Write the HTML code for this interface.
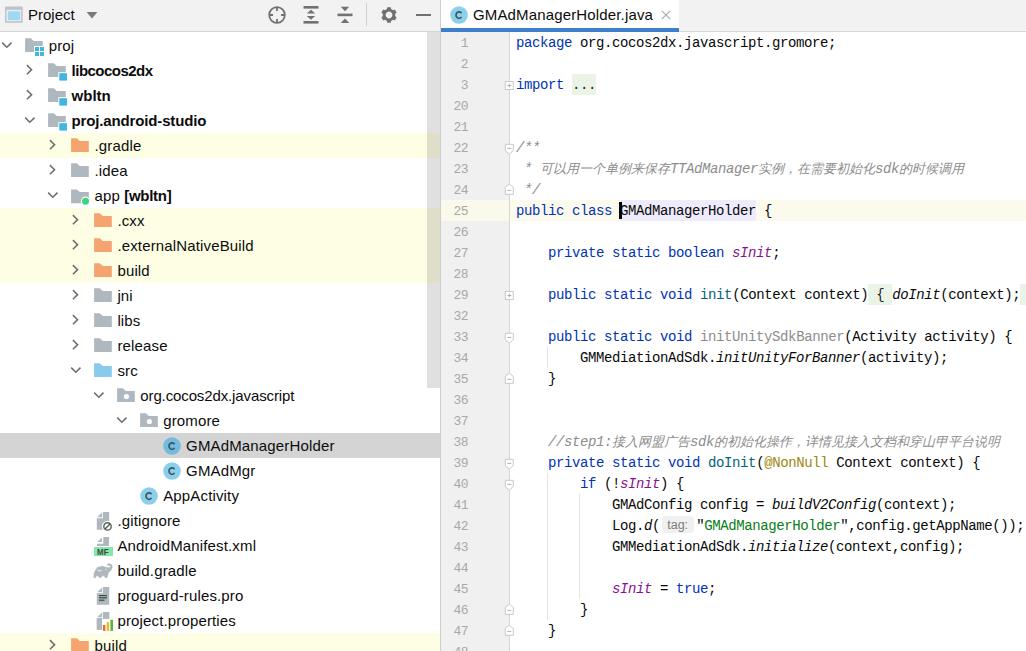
<!DOCTYPE html>
<html><head><meta charset="utf-8"><style>
html,body{margin:0;padding:0;width:1026px;height:651px;overflow:hidden;background:#fff;}
body{position:relative;font-family:"Liberation Sans",sans-serif;}
.ic{position:absolute;display:block;overflow:visible}
#left{position:absolute;left:0;top:0;width:440px;height:651px;background:#fff;overflow:hidden}
#lhead{position:absolute;left:0;top:0;width:440px;height:31px;background:#f2f2f2;border-bottom:1px solid #d4d4d4}
.row{position:absolute;left:0;width:440px;height:25px}
.yel{background:#fefee5}
.sel{background:#d4d4d4}
.tt{position:absolute;height:25px;line-height:25px;font-size:15px;letter-spacing:0.15px;color:#0c0c0c;white-space:nowrap}
.tt b{font-weight:bold;letter-spacing:-0.3px}
#sb{position:absolute;left:427px;top:32px;width:13px;height:356px;background:rgba(0,0,0,0.12)}
#div{position:absolute;left:440px;top:0;width:1px;height:651px;background:#cfcfcf}
#tabs{position:absolute;left:441px;top:0;width:585px;height:31px;background:#f2f2f2;border-bottom:1px solid #d6d6d6}
#tab{position:absolute;left:441px;top:0;width:238px;height:28px;background:#fff}
#tabline{position:absolute;left:441px;top:28px;width:238px;height:4px;background:#3d7fcb}
#tabt{position:absolute;left:473px;top:0;height:30px;line-height:30px;font-size:15px;letter-spacing:0.15px;color:#0c0c0c;white-space:nowrap}
#gutter{position:absolute;left:441px;top:32px;width:68px;height:619px;background:#f0f0f0}
#gline{position:absolute;left:509px;top:32px;width:1px;height:619px;background:#d8d8d8}
.ln{position:absolute;left:441px;width:27px;text-align:right;height:21px;line-height:21px;font-family:"Liberation Mono",monospace;font-size:13px;letter-spacing:-0.6px;color:#a8a8a8}
.cl{position:absolute;left:516px;height:21px;line-height:21px;font-family:"Liberation Mono",monospace;font-size:14px;letter-spacing:-0.4px;color:#080808;white-space:pre}
.k{color:#0033b3}
.c{color:#8c8c8c;font-style:italic}
.s{color:#067d17}
.an{color:#9e880d}
.sf{color:#871094;font-style:italic}
.m{color:#00627a}
.u{color:#8c8c8c}
.cl i{font-style:italic}
.cj{font-size:13px;letter-spacing:0}
.fold{display:inline-block;height:20px;padding-top:1px;line-height:21px;vertical-align:top;position:relative;top:-1px;background:#e9f4e6;color:#222}
.hl{display:inline-block;height:20px;padding-top:1px;line-height:21px;vertical-align:top;position:relative;top:-1px;background:#edebfc}
.inl{display:inline-block;width:32px;height:17px;line-height:18.5px;margin:0 2.5px 0 1.6px;vertical-align:1px;background:#f0f0f0;border-radius:4px;color:#7d7d7d;font-family:"Liberation Sans",sans-serif;font-size:12.5px;letter-spacing:0;text-align:center}
#caretrow{position:absolute;left:441px;top:200px;width:585px;height:21px;background:#fcfaed}
#caret{position:absolute;left:619px;top:202px;width:3px;height:17px;background:#000}
.guide{position:absolute;width:1px;background:#e4e4e4}
</style></head><body>
<div id="left">
<div id="lhead"></div>
<svg class="ic" style="left:0;top:0" width="30" height="30" viewBox="0 0 30 30"><rect x="5" y="6.5" width="17.7" height="16.2" rx="0.8" fill="#bcc3ca"/><rect x="6.5" y="9.8" width="14.7" height="11.4" fill="#eceef0"/><rect x="7.9" y="11.3" width="12.2" height="8.8" fill="#9ed8f2"/></svg>
<div class="tt" style="left:28px;top:2px;height:26px;line-height:26px;letter-spacing:0">Project</div>
<svg class="ic" style="left:86px;top:11px" width="12" height="8" viewBox="0 0 12 8"><path d="M0.5 1 H11.5 L6 7.5 Z" fill="#7a7a7a"/></svg>
<svg class="ic" style="left:268px;top:6px" width="18" height="18" viewBox="0 0 18 18"><circle cx="9" cy="9" r="7.8" fill="none" stroke="#717171" stroke-width="1.8"/><path d="M9 1.5 V5 M9 13 V16.5 M1.5 9 H5 M13 9 H16.5" stroke="#717171" stroke-width="1.8"/></svg>
<svg class="ic" style="left:303px;top:5px" width="16" height="20" viewBox="0 0 16 20"><rect x="0.5" y="1" width="15" height="2.6" fill="#717171"/><rect x="0.5" y="16" width="15" height="2.6" fill="#717171"/><path d="M3.8 8.6 L8 4.8 L12.2 8.6 Z M3.8 11 L8 14.8 L12.2 11 Z" fill="#717171"/></svg>
<svg class="ic" style="left:337px;top:5px" width="16" height="20" viewBox="0 0 16 20"><rect x="0.5" y="8.6" width="15" height="2.6" fill="#717171"/><path d="M3.8 1.8 L8 6.2 L12.2 1.8 Z M3.8 17.9 L8 13.5 L12.2 17.9 Z" fill="#717171"/></svg>
<div style="position:absolute;left:366px;top:3px;width:1px;height:23px;background:#cfcfcf"></div>
<svg class="ic" style="left:381px;top:7px" width="16" height="16" viewBox="0 0 16 16"><path fill="#717171" fill-rule="evenodd" d="M5.95 2.04 L6.20 0.21 L9.80 0.21 L10.05 2.04 L12.13 3.25 L13.85 2.54 L15.65 5.66 L14.18 6.80 L14.18 9.20 L15.65 10.34 L13.85 13.46 L12.13 12.75 L10.05 13.96 L9.80 15.79 L6.20 15.79 L5.95 13.96 L3.87 12.75 L2.15 13.46 L0.35 10.34 L1.82 9.20 L1.82 6.80 L0.35 5.66 L2.15 2.54 L3.87 3.25 Z M8 4.6 A3.4 3.4 0 1 0 8.001 4.6 Z"/></svg>
<div style="position:absolute;left:415.5px;top:13.7px;width:15px;height:2.5px;background:#717171"></div>
<div class="row" style="top:33px"></div>
<svg class="ic" style="left:0;top:33px" width="14.2" height="25" viewBox="0 0 14.2 25"><path d="M2.2 9.6 L6.8500000000000005 14.2 L11.5 9.6" fill="none" stroke="#6c6c6c" stroke-width="1.5"/></svg>
<svg class="ic" style="left:25px;top:33px" width="24" height="25" viewBox="0 0 24 25"><path d="M0.1 5.2 H5.8 L8.8 7.9 H17.8 V19 H0.1 Z" fill="#afb8bf"/><rect x="9" y="13" width="11" height="11" fill="#fff"/><rect x="10" y="14" width="4" height="4" fill="#40b6e0"/><rect x="10" y="19" width="4" height="4" fill="#40b6e0"/><rect x="15" y="14" width="4" height="4" fill="#40b6e0"/><rect x="15" y="19" width="4" height="4" fill="#40b6e0"/></svg>
<div class="tt" style="left:48.7px;top:33px">proj</div>
<div class="row" style="top:58px"></div>
<svg class="ic" style="left:0;top:58px" width="34.9" height="25" viewBox="0 0 34.9 25"><path d="M26.9 7.1 L31.599999999999998 11.65 L26.9 16.2" fill="none" stroke="#6c6c6c" stroke-width="1.5"/></svg>
<svg class="ic" style="left:48px;top:58px" width="24" height="25" viewBox="0 0 24 25"><path d="M0.1 5.2 H5.8 L8.8 7.9 H17.8 V19 H0.1 Z" fill="#afb8bf"/><rect x="10.3" y="14.2" width="9.7" height="9.4" fill="#fff"/><rect x="11.3" y="15.2" width="7.7" height="7.4" fill="#40b6e0"/></svg>
<div class="tt" style="left:71.6px;top:58px"><b style="letter-spacing:-0.52px">libcocos2dx</b></div>
<div class="row" style="top:83px"></div>
<svg class="ic" style="left:0;top:83px" width="34.9" height="25" viewBox="0 0 34.9 25"><path d="M26.9 7.1 L31.599999999999998 11.65 L26.9 16.2" fill="none" stroke="#6c6c6c" stroke-width="1.5"/></svg>
<svg class="ic" style="left:48px;top:83px" width="24" height="25" viewBox="0 0 24 25"><path d="M0.1 5.2 H5.8 L8.8 7.9 H17.8 V19 H0.1 Z" fill="#afb8bf"/><rect x="10.3" y="14.2" width="9.7" height="9.4" fill="#fff"/><rect x="11.3" y="15.2" width="7.7" height="7.4" fill="#40b6e0"/></svg>
<div class="tt" style="left:71.6px;top:83px"><b style="letter-spacing:0">wbltn</b></div>
<div class="row" style="top:108px"></div>
<svg class="ic" style="left:0;top:108px" width="37.2" height="25" viewBox="0 0 37.2 25"><path d="M25.2 9.6 L29.85 14.2 L34.5 9.6" fill="none" stroke="#6c6c6c" stroke-width="1.5"/></svg>
<svg class="ic" style="left:48px;top:108px" width="24" height="25" viewBox="0 0 24 25"><path d="M0.1 5.2 H5.8 L8.8 7.9 H17.8 V19 H0.1 Z" fill="#afb8bf"/><rect x="10.3" y="14.2" width="9.7" height="9.4" fill="#fff"/><rect x="11.3" y="15.2" width="7.7" height="7.4" fill="#40b6e0"/></svg>
<div class="tt" style="left:71.6px;top:108px"><b style="letter-spacing:-0.15px">proj.android-studio</b></div>
<div class="row yel" style="top:133px"></div>
<svg class="ic" style="left:0;top:133px" width="57.9" height="25" viewBox="0 0 57.9 25"><path d="M49.9 7.1 L54.6 11.65 L49.9 16.2" fill="none" stroke="#6c6c6c" stroke-width="1.5"/></svg>
<svg class="ic" style="left:71px;top:133px" width="24" height="25" viewBox="0 0 24 25"><path d="M0.1 5.2 H5.8 L8.8 7.9 H17.8 V19 H0.1 Z" fill="#f5a46f"/></svg>
<div class="tt" style="left:94.5px;top:133px">.gradle</div>
<div class="row" style="top:158px"></div>
<svg class="ic" style="left:0;top:158px" width="57.9" height="25" viewBox="0 0 57.9 25"><path d="M49.9 7.1 L54.6 11.65 L49.9 16.2" fill="none" stroke="#6c6c6c" stroke-width="1.5"/></svg>
<svg class="ic" style="left:71px;top:158px" width="24" height="25" viewBox="0 0 24 25"><path d="M0.1 5.2 H5.8 L8.8 7.9 H17.8 V19 H0.1 Z" fill="#afb8bf"/></svg>
<div class="tt" style="left:94.5px;top:158px">.idea</div>
<div class="row" style="top:183px"></div>
<svg class="ic" style="left:0;top:183px" width="60.2" height="25" viewBox="0 0 60.2 25"><path d="M48.2 9.6 L52.85 14.2 L57.5 9.6" fill="none" stroke="#6c6c6c" stroke-width="1.5"/></svg>
<svg class="ic" style="left:71px;top:183px" width="24" height="25" viewBox="0 0 24 25"><path d="M0.1 6.4 H5.8 L8.8 9.1 H17.8 V20.2 H0.1 Z" fill="#afb8bf"/><circle cx="14.5" cy="18.2" r="4.6" fill="#fff"/><circle cx="14.5" cy="18.2" r="3.5" fill="#3dd47c"/></svg>
<div class="tt" style="left:94.5px;top:183px">app <b>[wbltn]</b></div>
<div class="row yel" style="top:208px"></div>
<svg class="ic" style="left:0;top:208px" width="80.9" height="25" viewBox="0 0 80.9 25"><path d="M72.9 7.1 L77.60000000000001 11.65 L72.9 16.2" fill="none" stroke="#6c6c6c" stroke-width="1.5"/></svg>
<svg class="ic" style="left:94px;top:208px" width="24" height="25" viewBox="0 0 24 25"><path d="M0.1 5.2 H5.8 L8.8 7.9 H17.8 V19 H0.1 Z" fill="#f5a46f"/></svg>
<div class="tt" style="left:117.4px;top:208px">.cxx</div>
<div class="row yel" style="top:233px"></div>
<svg class="ic" style="left:0;top:233px" width="80.9" height="25" viewBox="0 0 80.9 25"><path d="M72.9 7.1 L77.60000000000001 11.65 L72.9 16.2" fill="none" stroke="#6c6c6c" stroke-width="1.5"/></svg>
<svg class="ic" style="left:94px;top:233px" width="24" height="25" viewBox="0 0 24 25"><path d="M0.1 5.2 H5.8 L8.8 7.9 H17.8 V19 H0.1 Z" fill="#f5a46f"/></svg>
<div class="tt" style="left:117.4px;top:233px">.externalNativeBuild</div>
<div class="row yel" style="top:258px"></div>
<svg class="ic" style="left:0;top:258px" width="80.9" height="25" viewBox="0 0 80.9 25"><path d="M72.9 7.1 L77.60000000000001 11.65 L72.9 16.2" fill="none" stroke="#6c6c6c" stroke-width="1.5"/></svg>
<svg class="ic" style="left:94px;top:258px" width="24" height="25" viewBox="0 0 24 25"><path d="M0.1 5.2 H5.8 L8.8 7.9 H17.8 V19 H0.1 Z" fill="#f5a46f"/></svg>
<div class="tt" style="left:117.4px;top:258px">build</div>
<div class="row" style="top:283px"></div>
<svg class="ic" style="left:0;top:283px" width="80.9" height="25" viewBox="0 0 80.9 25"><path d="M72.9 7.1 L77.60000000000001 11.65 L72.9 16.2" fill="none" stroke="#6c6c6c" stroke-width="1.5"/></svg>
<svg class="ic" style="left:94px;top:283px" width="24" height="25" viewBox="0 0 24 25"><path d="M0.1 5.2 H5.8 L8.8 7.9 H17.8 V19 H0.1 Z" fill="#afb8bf"/></svg>
<div class="tt" style="left:117.4px;top:283px">jni</div>
<div class="row" style="top:308px"></div>
<svg class="ic" style="left:0;top:308px" width="80.9" height="25" viewBox="0 0 80.9 25"><path d="M72.9 7.1 L77.60000000000001 11.65 L72.9 16.2" fill="none" stroke="#6c6c6c" stroke-width="1.5"/></svg>
<svg class="ic" style="left:94px;top:308px" width="24" height="25" viewBox="0 0 24 25"><path d="M0.1 5.2 H5.8 L8.8 7.9 H17.8 V19 H0.1 Z" fill="#afb8bf"/></svg>
<div class="tt" style="left:117.4px;top:308px">libs</div>
<div class="row" style="top:333px"></div>
<svg class="ic" style="left:0;top:333px" width="80.9" height="25" viewBox="0 0 80.9 25"><path d="M72.9 7.1 L77.60000000000001 11.65 L72.9 16.2" fill="none" stroke="#6c6c6c" stroke-width="1.5"/></svg>
<svg class="ic" style="left:94px;top:333px" width="24" height="25" viewBox="0 0 24 25"><path d="M0.1 5.2 H5.8 L8.8 7.9 H17.8 V19 H0.1 Z" fill="#afb8bf"/></svg>
<div class="tt" style="left:117.4px;top:333px">release</div>
<div class="row" style="top:358px"></div>
<svg class="ic" style="left:0;top:358px" width="83.2" height="25" viewBox="0 0 83.2 25"><path d="M71.2 9.6 L75.85000000000001 14.2 L80.5 9.6" fill="none" stroke="#6c6c6c" stroke-width="1.5"/></svg>
<svg class="ic" style="left:94px;top:358px" width="24" height="25" viewBox="0 0 24 25"><path d="M0.1 5.2 H5.8 L8.8 7.9 H17.8 V19 H0.1 Z" fill="#88cbec"/></svg>
<div class="tt" style="left:117.4px;top:358px">src</div>
<div class="row" style="top:383px"></div>
<svg class="ic" style="left:0;top:383px" width="106.2" height="25" viewBox="0 0 106.2 25"><path d="M94.2 9.6 L98.85000000000001 14.2 L103.5 9.6" fill="none" stroke="#6c6c6c" stroke-width="1.5"/></svg>
<svg class="ic" style="left:117px;top:383px" width="24" height="25" viewBox="0 0 24 25"><path d="M0.1 5.2 H5.8 L8.8 7.9 H17.8 V19 H0.1 Z" fill="#afb8bf"/><circle cx="9.4" cy="13.5" r="2.6" fill="#fff"/></svg>
<div class="tt" style="left:140.3px;top:383px"><span style="letter-spacing:-0.12px">org.cocos2dx.javascript</span></div>
<div class="row" style="top:408px"></div>
<svg class="ic" style="left:0;top:408px" width="129.2" height="25" viewBox="0 0 129.2 25"><path d="M117.2 9.6 L121.85000000000001 14.2 L126.5 9.6" fill="none" stroke="#6c6c6c" stroke-width="1.5"/></svg>
<svg class="ic" style="left:140px;top:408px" width="24" height="25" viewBox="0 0 24 25"><path d="M0.1 5.2 H5.8 L8.8 7.9 H17.8 V19 H0.1 Z" fill="#afb8bf"/><circle cx="9.4" cy="13.5" r="2.6" fill="#fff"/></svg>
<div class="tt" style="left:163.2px;top:408px">gromore</div>
<div class="row sel" style="top:433px"></div>
<svg class="ic" style="left:163px;top:436.9px" width="18" height="18" viewBox="0 0 18 18"><circle cx="9" cy="9" r="8.8" fill="#74bcde"/><path d="M11.5 7.3 A3.0 3.2 0 1 0 11.5 10.9" fill="none" stroke="#3b5762" stroke-width="1.7"/></svg>
<div class="tt" style="left:186.1px;top:433px">GMAdManagerHolder</div>
<div class="row" style="top:458px"></div>
<svg class="ic" style="left:163px;top:461.9px" width="18" height="18" viewBox="0 0 18 18"><circle cx="9" cy="9" r="8.8" fill="#8ccfea"/><path d="M11.5 7.3 A3.0 3.2 0 1 0 11.5 10.9" fill="none" stroke="#3b5762" stroke-width="1.7"/></svg>
<div class="tt" style="left:186.1px;top:458px">GMAdMgr</div>
<div class="row" style="top:483px"></div>
<svg class="ic" style="left:140px;top:486.9px" width="18" height="18" viewBox="0 0 18 18"><circle cx="9" cy="9" r="8.8" fill="#8ccfea"/><path d="M11.5 7.3 A3.0 3.2 0 1 0 11.5 10.9" fill="none" stroke="#3b5762" stroke-width="1.7"/></svg>
<div class="tt" style="left:163.2px;top:483px">AppActivity</div>
<div class="row" style="top:508px"></div>
<svg class="ic" style="left:0;top:508px" width="120" height="25" viewBox="0 0 120 25"><path d="M103 4 H109.2 V21.7 H96.8 V10.2 H103 Z" fill="#afb8bf"/><path d="M97.3 9.2 H102.2 V4.3 Z" fill="#afb8bf"/><circle cx="107.5" cy="18.4" r="5.6" fill="#fff"/><circle cx="107.5" cy="18.4" r="3.7" fill="none" stroke="#555e55" stroke-width="1.4"/><path d="M105 20.9 L110 15.9" stroke="#555e55" stroke-width="1.4"/></svg>
<div class="tt" style="left:117.4px;top:508px">.gitignore</div>
<div class="row" style="top:533px"></div>
<svg class="ic" style="left:0;top:533px" width="120" height="25" viewBox="0 0 120 25"><path d="M103.3 4 H109 V12.9 H97 V10.7 H103.3 Z" fill="#afb8bf"/><path d="M97.2 9.0 H101.9 V4.4 Z" fill="#afb8bf"/><rect x="94" y="14" width="19" height="9" fill="#88e5ac"/><text x="97" y="21.6" font-family="Liberation Sans" font-weight="bold" font-size="9.2" fill="#3b4a42" textLength="11.5" lengthAdjust="spacingAndGlyphs">MF</text></svg>
<div class="tt" style="left:117.4px;top:533px">AndroidManifest.xml</div>
<div class="row" style="top:558px"></div>
<svg class="ic" style="left:0;top:558px" width="120" height="25" viewBox="0 0 120 25"><path d="M93.9 19.5 L94.05 15.5 L95.5 12.2 L97.4 9.4 L102.2 8.3 L106.6 9.4 L109.2 9.8 L110.5 8.7 L109.9 7.2 L108.4 7.2 L107.3 7.4 L107.7 5.9 L109.2 5.6 L111.7 6.8 L112.3 9.2 L110.8 12.5 L108.3 14.7 L107 19.5 L105.1 19.5 L104.2 17.7 L102.2 17.7 L101.1 19.5 L99.2 19.5 L98.1 17.7 L96.5 17.7 L95.5 19.7 Z" fill="#afb8bf" stroke="#afb8bf" stroke-width="0.6" stroke-linejoin="round"/><path d="M97.2 11.8 Q98.5 13.6 101.6 12.6" fill="none" stroke="#fff" stroke-width="0.8"/><circle cx="106" cy="11.6" r="0.6" fill="#fff"/></svg>
<div class="tt" style="left:117.4px;top:558px">build.gradle</div>
<div class="row" style="top:583px"></div>
<svg class="ic" style="left:0;top:583px" width="120" height="25" viewBox="0 0 120 25"><path d="M103 4 H109.2 V21.7 H96.8 V10.2 H103 Z" fill="#afb8bf"/><path d="M97.3 9.2 H102.2 V4.3 Z" fill="#afb8bf"/><rect x="99" y="12" width="8" height="1.2" fill="#3f4a42"/><rect x="99" y="14.2" width="8" height="1.2" fill="#3f4a42"/><rect x="99" y="16.6" width="5.5" height="1.2" fill="#3f4a42"/></svg>
<div class="tt" style="left:117.4px;top:583px">proguard-rules.pro</div>
<div class="row" style="top:608px"></div>
<svg class="ic" style="left:0;top:608px" width="120" height="25" viewBox="0 0 120 25"><path d="M103 4 H109.2 V21.7 H96.8 V10.2 H103 Z" fill="#afb8bf"/><path d="M97.3 9.2 H102.2 V4.3 Z" fill="#afb8bf"/><rect x="102" y="10.8" width="12" height="13" fill="#fff"/><rect x="96.8" y="10.2" width="5.2" height="11.5" fill="#afb8bf"/><rect x="103" y="4" width="6.2" height="6.8" fill="#afb8bf"/><rect x="103" y="17" width="2.4" height="5.9" fill="#f26a1b"/><rect x="106.8" y="14.2" width="2.3" height="8.7" fill="#f0b429"/><rect x="110.4" y="11.8" width="2.6" height="11.1" fill="#5cb531"/></svg>
<div class="tt" style="left:117.4px;top:608px">project.properties</div>
<div class="row yel" style="top:633px"></div>
<svg class="ic" style="left:0;top:633px" width="57.9" height="25" viewBox="0 0 57.9 25"><path d="M49.9 7.1 L54.6 11.65 L49.9 16.2" fill="none" stroke="#6c6c6c" stroke-width="1.5"/></svg>
<svg class="ic" style="left:71px;top:633px" width="24" height="25" viewBox="0 0 24 25"><path d="M0.1 5.2 H5.8 L8.8 7.9 H17.8 V19 H0.1 Z" fill="#f5a46f"/></svg>
<div class="tt" style="left:94.5px;top:633px">build</div>
<div id="sb"></div>
</div>
<div id="div"></div>
<div id="tabs"></div>
<div id="tab"></div>
<div id="tabline"></div>
<svg class="ic" style="left:450px;top:6px" width="18" height="18" viewBox="0 0 18 18"><circle cx="9" cy="9" r="8.8" fill="#8ccfea"/><path d="M11.5 7.3 A3.0 3.2 0 1 0 11.5 10.9" fill="none" stroke="#3b5762" stroke-width="1.7"/></svg>
<div id="tabt">GMAdManagerHolder.java</div>
<svg class="ic" style="left:661px;top:10px" width="10" height="10" viewBox="0 0 10 10"><path d="M0.8 0.8 L9.2 9.2 M9.2 0.8 L0.8 9.2" stroke="#a8a8a8" stroke-width="1.1"/></svg>
<div id="caretrow"></div>
<div id="gutter"></div>
<div id="gline"></div>
<div style="position:absolute;left:441px;top:200px;width:68px;height:21px;background:#fbf8ec"></div>
<div class="ln" style="top:33px">1</div>
<div class="ln" style="top:54px">2</div>
<div class="ln" style="top:75px">3</div>
<svg class="ic" style="left:0;top:74px" width="520" height="21" viewBox="0 0 520 21"><rect x="505.3" y="7.5" width="8" height="8" fill="#fff" stroke="#c9c9c9" stroke-width="1"/><path d="M507.3 11.5 H511.3 M509.3 9.5 V13.5" stroke="#b0b0b0" stroke-width="1"/></svg>
<div class="ln" style="top:96px">20</div>
<div class="ln" style="top:117px">21</div>
<div class="ln" style="top:138px">22</div>
<svg class="ic" style="left:0;top:137px" width="520" height="21" viewBox="0 0 520 21"><path d="M505.3 7.3 H513.3 V13.6 L509.3 17 L505.3 13.6 Z" fill="#fff" stroke="#c9c9c9" stroke-width="1"/><path d="M507.3 11.4 H511.3" stroke="#b0b0b0" stroke-width="1"/></svg>
<div class="ln" style="top:159px">23</div>
<div class="ln" style="top:180px">24</div>
<svg class="ic" style="left:0;top:179px" width="520" height="21" viewBox="0 0 520 21"><path d="M505.3 15.3 H513.3 V8.4 L509.3 5 L505.3 8.4 Z" fill="#fff" stroke="#c9c9c9" stroke-width="1"/><path d="M507.3 11.4 H511.3" stroke="#b0b0b0" stroke-width="1"/></svg>
<div class="ln" style="top:201px">25</div>
<div class="ln" style="top:222px">26</div>
<div class="ln" style="top:243px">27</div>
<div class="ln" style="top:264px">28</div>
<div class="ln" style="top:285px">29</div>
<svg class="ic" style="left:0;top:284px" width="520" height="21" viewBox="0 0 520 21"><rect x="505.3" y="7.5" width="8" height="8" fill="#fff" stroke="#c9c9c9" stroke-width="1"/><path d="M507.3 11.5 H511.3 M509.3 9.5 V13.5" stroke="#b0b0b0" stroke-width="1"/></svg>
<div class="ln" style="top:306px">32</div>
<div class="ln" style="top:327px">33</div>
<svg class="ic" style="left:0;top:326px" width="520" height="21" viewBox="0 0 520 21"><path d="M505.3 7.3 H513.3 V13.6 L509.3 17 L505.3 13.6 Z" fill="#fff" stroke="#c9c9c9" stroke-width="1"/><path d="M507.3 11.4 H511.3" stroke="#b0b0b0" stroke-width="1"/></svg>
<div class="ln" style="top:348px">34</div>
<div class="ln" style="top:369px">35</div>
<svg class="ic" style="left:0;top:368px" width="520" height="21" viewBox="0 0 520 21"><path d="M505.3 15.3 H513.3 V8.4 L509.3 5 L505.3 8.4 Z" fill="#fff" stroke="#c9c9c9" stroke-width="1"/><path d="M507.3 11.4 H511.3" stroke="#b0b0b0" stroke-width="1"/></svg>
<div class="ln" style="top:390px">36</div>
<div class="ln" style="top:411px">37</div>
<div class="ln" style="top:432px">38</div>
<div class="ln" style="top:453px">39</div>
<svg class="ic" style="left:0;top:452px" width="520" height="21" viewBox="0 0 520 21"><path d="M505.3 7.3 H513.3 V13.6 L509.3 17 L505.3 13.6 Z" fill="#fff" stroke="#c9c9c9" stroke-width="1"/><path d="M507.3 11.4 H511.3" stroke="#b0b0b0" stroke-width="1"/></svg>
<div class="ln" style="top:474px">40</div>
<svg class="ic" style="left:0;top:473px" width="520" height="21" viewBox="0 0 520 21"><path d="M505.3 7.3 H513.3 V13.6 L509.3 17 L505.3 13.6 Z" fill="#fff" stroke="#c9c9c9" stroke-width="1"/><path d="M507.3 11.4 H511.3" stroke="#b0b0b0" stroke-width="1"/></svg>
<div class="ln" style="top:495px">41</div>
<div class="ln" style="top:516px">42</div>
<div class="ln" style="top:537px">43</div>
<div class="ln" style="top:558px">44</div>
<div class="ln" style="top:579px">45</div>
<div class="ln" style="top:600px">46</div>
<svg class="ic" style="left:0;top:599px" width="520" height="21" viewBox="0 0 520 21"><path d="M505.3 15.3 H513.3 V8.4 L509.3 5 L505.3 8.4 Z" fill="#fff" stroke="#c9c9c9" stroke-width="1"/><path d="M507.3 11.4 H511.3" stroke="#b0b0b0" stroke-width="1"/></svg>
<div class="ln" style="top:621px">47</div>
<svg class="ic" style="left:0;top:620px" width="520" height="21" viewBox="0 0 520 21"><path d="M505.3 15.3 H513.3 V8.4 L509.3 5 L505.3 8.4 Z" fill="#fff" stroke="#c9c9c9" stroke-width="1"/><path d="M507.3 11.4 H511.3" stroke="#b0b0b0" stroke-width="1"/></svg>
<div class="ln" style="top:642px">48</div>
<div class="guide" style="left:547px;top:347px;height:21px"></div>
<div class="guide" style="left:547px;top:473px;height:147px"></div>
<div class="guide" style="left:579px;top:494px;height:105px"></div>
<div class="cl" style="top:33px"><span class="k">package</span> org.cocos2dx.javascript.gromore;</div>
<div class="cl" style="top:54px"></div>
<div class="cl" style="top:75px"><span class="k">import</span> <span class="fold">...</span></div>
<div class="cl" style="top:96px"></div>
<div class="cl" style="top:117px"></div>
<div class="cl" style="top:138px"><span class="c">/**</span></div>
<div class="cl" style="top:159px"><span class="c"> * <span class="cj">可以用一个单例来保存</span>TTAdManager<span class="cj">实例，在需要初始化</span>sdk<span class="cj">的时候调用</span></span></div>
<div class="cl" style="top:180px"><span class="c"> */</span></div>
<div class="cl" style="top:201px"><span class="k">public</span> <span class="k">class</span> <span class="hl">GMAdManagerHolder</span> {</div>
<div class="cl" style="top:222px"></div>
<div class="cl" style="top:243px">    <span class="k">private</span> <span class="k">static</span> <span class="k">boolean</span> <span class="sf">sInit</span>;</div>
<div class="cl" style="top:264px"></div>
<div class="cl" style="top:285px">    <span class="k">public</span> <span class="k">static</span> <span class="k">void</span> <span class="m">init</span>(Context context)<span class="fold"> { </span><i>doInit</i>(context);<span class="fold"> }</span></div>
<div class="cl" style="top:306px"></div>
<div class="cl" style="top:327px">    <span class="k">public</span> <span class="k">static</span> <span class="k">void</span> <span class="u">initUnitySdkBanner</span>(Activity activity) {</div>
<div class="cl" style="top:348px">        GMMediationAdSdk.<i>initUnityForBanner</i>(activity);</div>
<div class="cl" style="top:369px">    }</div>
<div class="cl" style="top:390px"></div>
<div class="cl" style="top:411px"></div>
<div class="cl" style="top:432px">    <span class="c">//step1:<span class="cj">接入网盟广告</span>sdk<span class="cj">的初始化操作，详情见接入文档和穿山甲平台说明</span></span></div>
<div class="cl" style="top:453px">    <span class="k">private</span> <span class="k">static</span> <span class="k">void</span> <span class="m">doInit</span>(<span class="an">@NonNull</span> Context context) {</div>
<div class="cl" style="top:474px">        <span class="k">if</span> (!<span class="sf">sInit</span>) {</div>
<div class="cl" style="top:495px">            GMAdConfig config = <i>buildV2Config</i>(context);</div>
<div class="cl" style="top:516px">            Log.<i>d</i>(<span class="inl">tag:</span>"<span class="s">GMAdManagerHolder</span>",config.getAppName());</div>
<div class="cl" style="top:537px">            GMMediationAdSdk.<i>initialize</i>(context,config);</div>
<div class="cl" style="top:558px"></div>
<div class="cl" style="top:579px">            <span class="sf">sInit</span> = <span class="k">true</span>;</div>
<div class="cl" style="top:600px">        }</div>
<div class="cl" style="top:621px">    }</div>
<div class="cl" style="top:642px"></div>
<div id="caret"></div>
</body></html>
